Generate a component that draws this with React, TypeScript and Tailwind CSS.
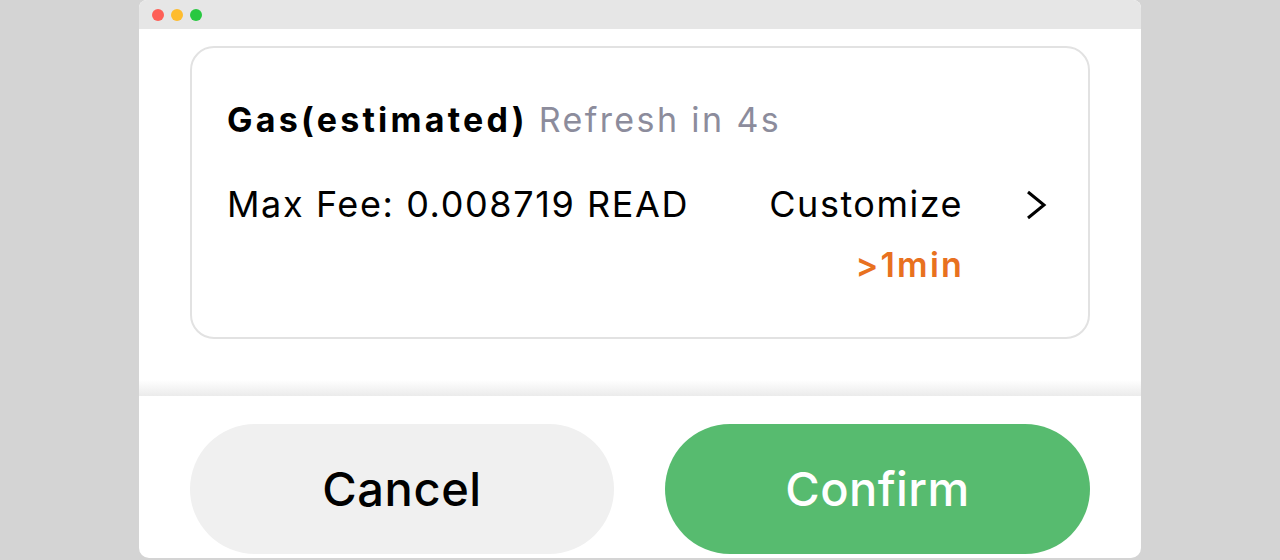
export default function App() {
  return (
    <div
      className="w-[1280px] h-[560px] bg-[#d4d4d4] overflow-hidden flex justify-center"
      style={{ fontFamily: "Inter, 'Noto Sans', sans-serif" }}
    >
      <div className="w-[1002px] h-[558px] bg-white rounded-b-[10px] rounded-t-[8px] overflow-hidden flex flex-col">
        {/* title bar */}
        <div className="h-[29px] bg-[#e6e6e6] flex items-center gap-[7px] pl-[13px] shrink-0">
          <span className="w-[12px] h-[12px] rounded-full bg-[#fe5f57]" />
          <span className="w-[12px] h-[12px] rounded-full bg-[#febc2e]" />
          <span className="w-[12px] h-[12px] rounded-full bg-[#28c840]" />
        </div>

        {/* gas card */}
        <div className="px-[51px] pt-[17px]">
          <div className="h-[293px] rounded-[24px] border-2 border-[#e2e2e2] pl-[35px] pr-[40px] pt-[48px]">
            <div className="flex items-baseline gap-[11px] text-[34px] leading-[48px]">
              <span className="font-bold text-black tracking-[3.2px]">Gas(estimated)</span>
              <span className="text-[#8c8c9c] tracking-[2.4px]">Refresh in 4s</span>
            </div>
            <div className="flex mt-[36px]">
              <span className="text-[36px] leading-[48px] text-black tracking-[1.6px]">Max Fee: 0.008719 READ</span>
              <div className="ml-auto flex flex-col items-end">
                <span className="text-[36px] leading-[48px] text-black tracking-[1.5px] mr-[-1px]">Customize</span>
                <span className="text-[34px] leading-[48px] font-semibold text-[#e8711f] tracking-[2.2px] mt-[13px] mr-[-2px]">&gt;1min</span>
              </div>
              <div className="w-[86px] flex justify-end pt-[10px]">
                <svg width="24" height="30" viewBox="0 0 24 30" fill="none">
                  <path d="M4 2 L20 15 L4 28" stroke="#000" strokeWidth="3" strokeLinejoin="miter" />
                </svg>
              </div>
            </div>
          </div>
        </div>

        {/* divider */}
        <div className="h-[41px] shrink-0" />
        <div className="h-[16px] bg-gradient-to-b from-white to-[#ebebeb] shrink-0" />

        {/* footer */}
        <div className="flex-1 flex gap-[51px] px-[51px] pt-[28px]">
          <button className="w-[424px] h-[130px] rounded-full bg-[#f0f0f0] text-[47px] font-medium tracking-[0.6px] text-black">
            Cancel
          </button>
          <button className="w-[425px] h-[130px] rounded-full bg-[#57bb6f] text-[47px] font-medium tracking-[0.4px] text-white">
            Confirm
          </button>
        </div>
      </div>
    </div>
  );
}
